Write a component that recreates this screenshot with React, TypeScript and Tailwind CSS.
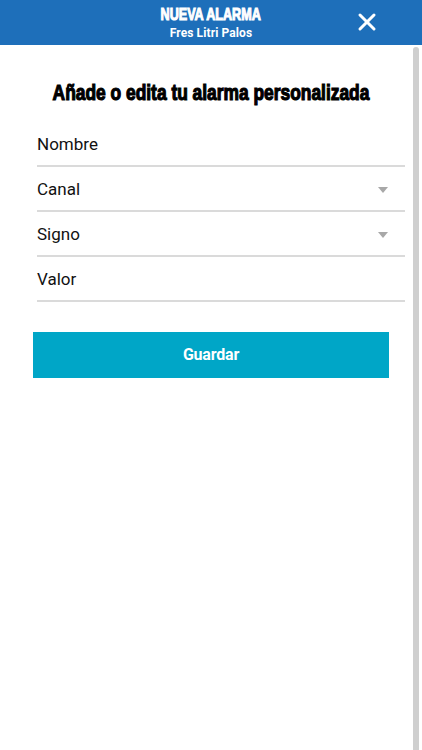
import { X } from 'lucide-react';

const fields = [
  { label: 'Nombre', select: false },
  { label: 'Canal', select: true },
  { label: 'Signo', select: true },
  { label: 'Valor', select: false },
];

export default function App() {
  return (
    <div className="relative h-[750px] w-[422px] overflow-hidden bg-white font-['Roboto',sans-serif]">
      <header className="relative flex h-[45px] flex-col items-center bg-[#1e6fba] pt-[6px] text-white">
        <div className="h-[18px] scale-x-[0.74] text-[17px] leading-[18px] font-bold whitespace-nowrap [font-family:Impact,'Liberation_Sans',sans-serif] [-webkit-text-stroke:1.1px_white]">
          NUEVA ALARMA
        </div>
        <div className="mt-[1px] text-[12px] leading-[16px] font-bold tracking-[0.1px]">Fres Litri Palos</div>
        <button className="absolute top-[8px] right-[41px] text-white">
          <X size={28} strokeWidth={2.6} />
        </button>
      </header>

      <h1 className="mt-[35px] scale-x-[0.79] text-center text-[22px] leading-[26px] font-bold whitespace-nowrap text-black [font-family:Impact,'Liberation_Sans',sans-serif] [-webkit-text-stroke:1.2px_black]">
        Añade o edita tu alarma personalizada
      </h1>

      <form className="mt-[16px] ml-[37px] w-[368px]">
        {fields.map((f) => (
          <div key={f.label} className="flex h-[45px] items-center justify-between border-b-[2px] border-[#dadada] pt-[2px]">
            <span className="text-[17px] text-[#111]">{f.label}</span>
            {f.select && (
              <span className="mr-[17px] h-0 w-0 border-x-[5px] border-t-[6px] border-x-transparent border-t-[#a8a8a8]" />
            )}
          </div>
        ))}
      </form>

      <button className="mt-[30px] ml-[33px] flex h-[46px] w-[356px] items-center justify-center bg-[#00a6c7] text-[16px] font-bold tracking-[-0.2px] text-white">
        Guardar
      </button>

      <div className="absolute top-[47px] right-[3px] bottom-0 w-[6px] rounded-t-[3px] bg-[#cfcfcf]" />
    </div>
  );
}
